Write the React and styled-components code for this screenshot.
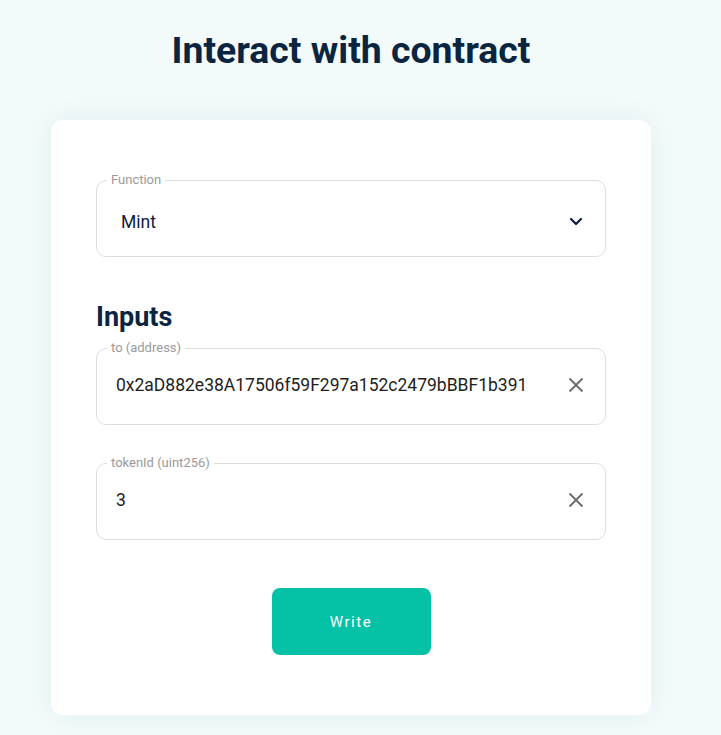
import React from "react";
import styled, { createGlobalStyle } from "styled-components";

const GlobalStyle = createGlobalStyle`
  html, body {
    margin: 0;
    padding: 0;
    background: #f2fafa;
    font-family: Roboto, "Liberation Sans", sans-serif;
  }
`;

const Page = styled.div`
  box-sizing: border-box;
  width: calc(100% - 19px);
  display: flex;
  flex-direction: column;
  align-items: center;
  padding-top: 29px;
  padding-bottom: 20px;
`;

const Title = styled.h1`
  margin: 0 0 48px;
  font-size: 37.4px;
  line-height: 43px;
  font-weight: 700;
  color: #0b2540;
`;

const Card = styled.div`
  box-sizing: border-box;
  width: 600px;
  padding: 53px 45px 60px;
  background: #fff;
  border-radius: 12px;
  box-shadow: 0 0 30px rgba(20, 70, 70, 0.06);
  display: flex;
  flex-direction: column;
`;

const Field = styled.fieldset`
  margin: ${(p) => p.$gap || 0}px 0 0;
  padding: 0;
  border: 1px solid #dedede;
  border-radius: 10px;
  min-width: 0;
`;

const Legend = styled.legend`
  margin-left: 10px;
  padding: 0 4px;
  font-size: 13px;
  line-height: 14px;
  color: #9a9a9a;
`;

const Row = styled.div`
  box-sizing: border-box;
  display: flex;
  align-items: center;
  height: 69px;
  padding: 0 20px ${(p) => p.$lift || 0}px ${(p) => p.$indent}px;
`;

const Value = styled.span`
  flex: 1;
  font-size: 17.5px;
  color: ${(p) => (p.$navy ? "#0d1b3e" : "#1e1e1e")};
`;

const IconBox = styled.span`
  display: flex;
  align-items: center;
  justify-content: center;
  width: 18px;
  height: 18px;
`;

const Heading = styled.h2`
  margin: 44px 0 8px;
  font-size: 27px;
  line-height: 32px;
  font-weight: 700;
  color: #0b2540;
`;

const Button = styled.button`
  align-self: center;
  margin-top: 48px;
  width: 159px;
  height: 67px;
  border: none;
  border-radius: 8px;
  background: #05c2a7;
  color: #fff;
  font-family: Roboto, "Liberation Sans", sans-serif;
  font-size: 15px;
  font-weight: 400;
  letter-spacing: 1.6px;
  cursor: pointer;
`;

const Chevron = () => (
  <svg width="14" height="9" viewBox="0 0 14 9" fill="none">
    <path d="M2 2l5 5 5-5" stroke="#0d1b3e" strokeWidth="2.2" strokeLinecap="round" strokeLinejoin="round" />
  </svg>
);

const Cross = () => (
  <svg width="16" height="16" viewBox="0 0 16 16" fill="none">
    <path d="M1.5 1.5l13 13M14.5 1.5l-13 13" stroke="#6b6b6b" strokeWidth="1.8" />
  </svg>
);

const inputs = [
  { label: "to (address)", value: "0x2aD882e38A17506f59F297a152c2479bBBF1b391" },
  { label: "tokenId (uint256)", value: "3" },
];

export default function App() {
  return (
    <>
      <GlobalStyle />
      <Page>
        <Title>Interact with contract</Title>
        <Card>
          <Field>
            <Legend>Function</Legend>
            <Row $indent={24}>
              <Value $navy>Mint</Value>
              <IconBox>
                <Chevron />
              </IconBox>
            </Row>
          </Field>
          <Heading>Inputs</Heading>
          {inputs.map((input, i) => (
            <Field key={input.label} $gap={i === 0 ? 0 : 31}>
              <Legend>{input.label}</Legend>
              <Row $indent={19} $lift={9}>
                <Value>{input.value}</Value>
                <IconBox>
                  <Cross />
                </IconBox>
              </Row>
            </Field>
          ))}
          <Button>Write</Button>
        </Card>
      </Page>
    </>
  );
}
